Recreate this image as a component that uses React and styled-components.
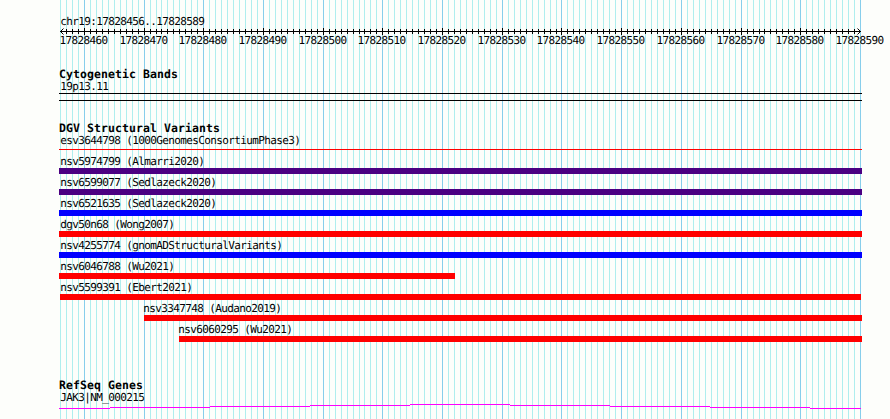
import styled, { createGlobalStyle } from "styled-components";

const REGION_START = 17828456;
const REGION_SIZE = 134;
const PANEL_LEFT = 60;
const PANEL_WIDTH = 800;

const positions = Array.from({ length: REGION_SIZE + 1 }, (_, i) => ({
  bp: REGION_START + i,
  x: Math.round(PANEL_LEFT + (i * PANEL_WIDTH) / REGION_SIZE),
  major: (REGION_START + i) % 10 === 0,
}));

const variants = [
  { name: "nsv5974799 (Almarri2020)", color: "#4b0082", start: 59, end: 862 },
  { name: "nsv6599077 (Sedlazeck2020)", color: "#4b0082", start: 59, end: 862 },
  { name: "nsv6521635 (Sedlazeck2020)", color: "#0000ff", start: 59, end: 862 },
  { name: "dgv50n68 (Wong2007)", color: "#ff0000", start: 59, end: 862 },
  { name: "nsv4255774 (gnomADStructuralVariants)", color: "#0000ff", start: 59, end: 862 },
  { name: "nsv6046788 (Wu2021)", color: "#ff0000", start: 59, end: 455 },
  { name: "nsv5599391 (Ebert2021)", color: "#ff0000", start: 60, end: 861, indent: 0.3 },
  { name: "nsv3347748 (Audano2019)", color: "#ff0000", start: 144, end: 862, indent: -0.7 },
  { name: "nsv6060295 (Wu2021)", color: "#ff0000", start: 179, end: 862, indent: -0.7 },
];

const Grid = () => (
  <GridLayer width="890" height="419" shapeRendering="crispEdges">
    {positions.map(({ bp, x, major }) => (
      <rect key={bp} x={x} y="0" width="1" height="419" fill={major ? "#87ceeb" : "#afeeee"} />
    ))}
  </GridLayer>
);

const Ruler = () => (
  <RulerDrawing width="890" height="22">
    <g shapeRendering="crispEdges">
      <rect x="60" y="4" width="801" height="1" />
      {/* the arrowheads take the place of the outermost ticks */}
      {positions.slice(1, -1).map(({ bp, x, major }) => (
        <rect key={bp} x={x} y={major ? 1 : 2} width="1" height={major ? 7 : 5} />
      ))}
    </g>
    <path d="M63.5 1.5 60.5 4.5l3 3M857.5 1.5l3 3-3 3" fill="none" stroke="#000" />
    {positions
      .filter(({ major }) => major)
      .map(({ bp, x }) => (
        <RulerLabel key={bp} x={x - 24.6} y="17">
          {bp}
        </RulerLabel>
      ))}
  </RulerDrawing>
);

const App = () => {
  return (
    <Browser>
      <GlobalStyle />
      <Grid />
      <Region>chr19:17828456..17828589</Region>
      <Ruler />
      <Track $top={19}>
        <TrackTitle>Cytogenetic Bands</TrackTitle>
        <FeatureName>19p13.11</FeatureName>
        <Band />
      </Track>
      <Track $top={21}>
        <TrackTitle>DGV Structural Variants</TrackTitle>
        <FeatureName>esv3644798 (1000GenomesConsortiumPhase3)</FeatureName>
        <ThinFeature />
        {variants.map(({ name, color, start, end, indent = 1.3 }) => (
          <Variant key={name} $start={start}>
            <VariantName $indent={indent}>{name}</VariantName>
            <Bar $width={end - start} $color={color} />
          </Variant>
        ))}
      </Track>
      <Track $top={37}>
        <TrackTitle>RefSeq Genes</TrackTitle>
        <FeatureName>JAK3|NM_000215</FeatureName>
        <Transcript width="890" height="8" shapeRendering="crispEdges">
          <path
            d="M59 4.5H110M110 3.5H210M210 2.5H310M310 1.5H410M410 0.5H510M510 1.5H610M610 2.5H710M710 3.5H810M810 4.5H861"
            stroke="#ff00ff"
          />
        </Transcript>
      </Track>
    </Browser>
  );
};

export default App;

const GlobalStyle = createGlobalStyle`
  body {
    margin: 0;
    background: #fdfefb;
  }
`;

const Browser = styled.main`
  position: relative;
  display: flex;
  flex-direction: column;
  width: 890px;
  height: 419px;
  box-sizing: border-box;
  padding-top: 16px;
  overflow: hidden;
  color: #000;
  font-family: "DejaVu Sans Mono", monospace;
  font-size: 11px;
  line-height: 12px;
  letter-spacing: -0.622px;
  text-rendering: geometricPrecision;
  white-space: nowrap;
`;

// sits behind every track
const GridLayer = styled.svg`
  position: absolute;
  top: 0;
  left: 0;
  z-index: -1;
`;

const Region = styled.div`
  height: 11px;
  padding-left: 60.3px;
`;

const RulerDrawing = styled.svg`
  display: block;
  flex-shrink: 0;
`;

const RulerLabel = styled.text`
  fill: #000;
`;

const Track = styled.section`
  display: flex;
  flex-direction: column;
  flex-shrink: 0;
  padding-top: ${({ $top }) => $top}px;
`;

const TrackTitle = styled.h2`
  height: 13px;
  margin: 0;
  padding-left: 59px;
  font-size: 11.5px;
  font-weight: 700;
  letter-spacing: 0.077px;
`;

const FeatureName = styled.div`
  height: 12px;
  padding-left: 60.3px;
`;

const Band = styled.div`
  width: 803px;
  height: 8px;
  box-sizing: border-box;
  margin: 0 0 0 59px;
  border-top: 1px solid #000;
  border-bottom: 1px solid #000;
`;

const ThinFeature = styled.div`
  width: 803px;
  height: 1px;
  margin: 2px 0 3px 59px;
  background: #ff0000;
`;

const Variant = styled.div`
  height: 21px;
  margin-left: ${({ $start }) => $start}px;
`;

const VariantName = styled.div`
  height: 12px;
  padding-top: 3px;
  text-indent: ${({ $indent }) => $indent}px;
`;

const Bar = styled.div`
  width: ${({ $width }) => $width}px;
  height: 6px;
  background: ${({ $color }) => $color};
`;

const Transcript = styled.svg`
  display: block;
`;
